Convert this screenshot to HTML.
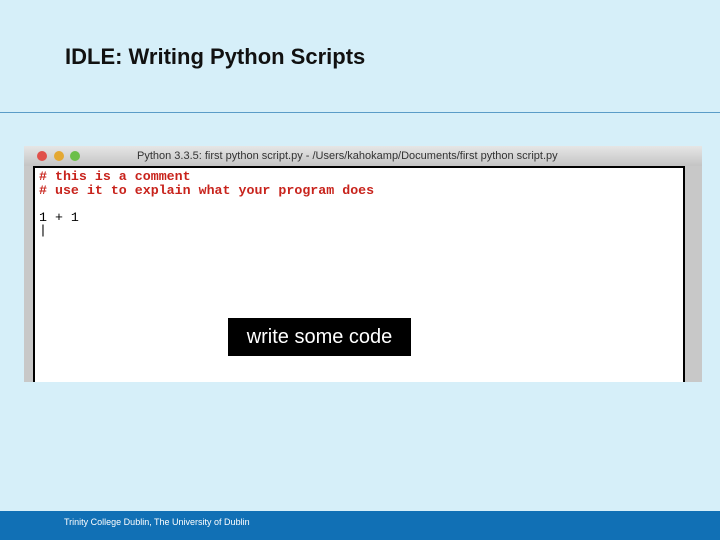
<!DOCTYPE html>
<html><head><style>
body{margin:0;width:720px;height:540px;background:#d6eff9;position:relative;overflow:hidden;font-family:"Liberation Sans",sans-serif}
.t{position:absolute;left:65px;top:44px;font-size:22px;font-weight:bold;color:#111}
.line{position:absolute;left:0;top:112px;width:720px;height:1px;background:#5a9cc8}
.win{position:absolute;left:24px;top:146px;width:678px;height:236px;background:#c8c8c8}
.tb{position:absolute;left:0;top:0;width:678px;height:20px;background:linear-gradient(#e6e6e6,#c4c4c4);font-size:11px;color:#333}
.ed{position:absolute;left:9px;top:20px;width:652px;height:216px;background:#fff;border-left:2px solid #000;border-right:2px solid #000;border-top:2px solid #000;box-sizing:border-box}
.dot{position:absolute;top:5px;width:10px;height:10px;border-radius:50%}
pre{margin:0;position:absolute;left:4px;top:2px;font-family:"Liberation Mono",monospace;font-size:13.3px;line-height:13.5px;color:#c8231c;font-weight:bold}
.box{position:absolute;left:228px;top:318px;width:183px;height:38px;background:#000;color:#fff;font-size:20px;line-height:38px;text-align:center}
.ft{position:absolute;left:0;top:511px;width:720px;height:29px;background:#1170b5}
.ft span{position:absolute;left:64px;top:6px;font-size:9px;color:#fff}
</style></head><body>
<div class="t">IDLE: Writing Python Scripts</div>
<div class="line"></div>
<div class="win">
<div class="tb"><div class="dot" style="left:13px;background:#e0504a"></div><div class="dot" style="left:30px;background:#e4a832"></div><div class="dot" style="left:46px;background:#6cbf4a"></div>
<span style="position:absolute;left:113px;top:4px">Python 3.3.5: first python script.py - /Users/kahokamp/Documents/first python script.py</span></div>
<div class="ed"><pre># this is a comment
# use it to explain what your program does
<span style="color:#000;font-weight:normal">
1 + 1
|</span></pre></div>
</div>
<div class="box">write some code</div>
<div class="ft"><span>Trinity College Dublin, The University of Dublin</span></div>
</body></html>
